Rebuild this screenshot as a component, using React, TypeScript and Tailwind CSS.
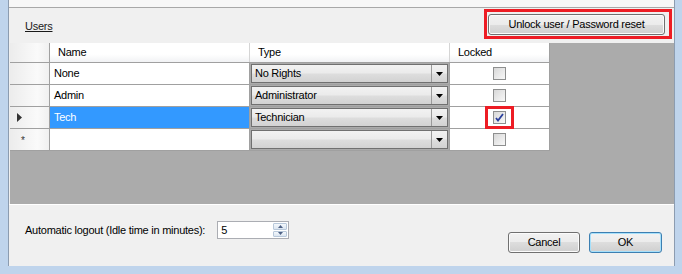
const FONT = "font-['Liberation_Sans',Arial,sans-serif] text-[11px] leading-none tracking-[-0.25px]";

type UserRow = { name: string; type: string; locked: boolean; current?: boolean; isNew?: boolean };

const rows: UserRow[] = [
  { name: 'None', type: 'No Rights', locked: false },
  { name: 'Admin', type: 'Administrator', locked: false },
  { name: 'Tech', type: 'Technician', locked: true, current: true },
  { name: '', type: '', locked: false, isNew: true },
];

function ComboCell({ value }: { value: string }) {
  return (
    <div className="flex h-full w-[200px] items-stretch border-r border-[#a0a0a0] p-[1px]">
      <div className="flex flex-1 border border-[#707070] bg-[linear-gradient(#f2f2f2_0%,#ebebeb_45%,#dddddd_55%,#d2d2d2_100%)]">
        <div className="flex flex-1 items-center pl-[3px] text-black">{value}</div>
        <div className="flex w-[16px] items-center justify-center border-l border-[#9a9a9a]">
          <svg width="7" height="4" viewBox="0 0 7 4">
            <path d="M0 0h7L3.5 4z" fill="#000" />
          </svg>
        </div>
      </div>
    </div>
  );
}

function CheckBox({ checked }: { checked: boolean }) {
  return (
    <div className="flex h-[13px] w-[13px] items-center justify-center border border-[#8e8f8f] bg-[linear-gradient(135deg,#d8d8d8,#f8f8f8)]">
      {checked && (
        <svg width="9" height="9" viewBox="0 0 9 9">
          <path d="M1 5l2 2.5L8 1" stroke="#2a3f9c" strokeWidth="1.8" fill="none" />
        </svg>
      )}
    </div>
  );
}

function RowHeader({ row }: { row: UserRow }) {
  return (
    <div className="flex h-full w-[40px] items-center border-r border-[#a0a0a0] bg-[linear-gradient(90deg,#ececec,#fafafa_70%,#f0f0f0)]">
      {row.current && (
        <svg className="ml-[7px]" width="5" height="9" viewBox="0 0 5 9">
          <path d="M0 0l5 4.5L0 9z" fill="#333" />
        </svg>
      )}
      {row.isNew && <span className="ml-[11px] mt-[3px] text-[10px] text-[#333]">*</span>}
    </div>
  );
}

function GridRow({ row }: { row: UserRow }) {
  return (
    <div className="flex h-[22px] border-b border-[#a0a0a0]">
      <RowHeader row={row} />
      <div
        className={`flex w-[200px] items-center border-r border-[#a0a0a0] pl-[4px] ${
          row.current ? 'bg-[#3399ff] text-white' : 'bg-white text-black'
        }`}
      >
        {row.name}
      </div>
      <ComboCell value={row.type} />
      <div className="flex w-[100px] items-center justify-center border-r border-[#a0a0a0] bg-white">
        {row.current ? (
          <div className="border-[3px] border-[#ed1c24] px-[5px] py-[2px]">
            <CheckBox checked />
          </div>
        ) : (
          <CheckBox checked={row.locked} />
        )}
      </div>
    </div>
  );
}

function WinButton({ children, width, focused }: { children: string; width: string; focused?: boolean }) {
  return (
    <div
      className={`flex h-[21px] items-center justify-center rounded-[3px] border text-black ${width} ${
        focused
          ? 'border-[#3c7fb1] shadow-[inset_0_0_0_1px_#a6e0fb] bg-[linear-gradient(#f2f2f2_0%,#ebebeb_50%,#dddddd_50%,#cfcfcf_100%)]'
          : 'border-[#707070] shadow-[inset_0_0_0_1px_#fbfbfb] bg-[linear-gradient(#f2f2f2_0%,#ebebeb_50%,#dddddd_50%,#cfcfcf_100%)]'
      }`}
    >
      {children}
    </div>
  );
}

export default function App() {
  return (
    <div className={`flex h-[274px] w-[682px] bg-[#bfd4ec] pb-[8px] pl-[8px] pr-[7px] ${FONT}`}>
      <div className="flex flex-1 flex-col border-x border-[#8c9cb0]">
        <div className="h-[8px] border-b border-[#a8a8a8] bg-[#f7f7f7]" />

        <div className="flex flex-1 flex-col bg-[#f0f0f0]">
          {/* top bar */}
          <div className="flex h-[35px] items-start justify-between">
            <span className="ml-[16px] mt-[13px] text-[#1a1a1a] underline">Users</span>
            <div className="mr-[2px] mt-[1px] border-[3px] border-[#ed1c24] pb-[1px] pl-[1px] pr-[4px] pt-[2px]">
              <WinButton width="w-[177px]">Unlock user / Password reset</WinButton>
            </div>
          </div>

          {/* grid */}
          <div className="ml-[1px] h-[161px] bg-[#ababab]">
            <div className="flex h-[20px] w-[540px] border-b border-[#a0a0a0] bg-[linear-gradient(#ffffff,#ffffff_60%,#f1f2f4)]">
              <div className="w-[40px] border-r border-[#a0a0a0] bg-[linear-gradient(90deg,#ececec,#fafafa_70%,#f0f0f0)]" />
              <div className="flex w-[200px] items-center border-r border-[#d5d5d5] pl-[8px] text-black">Name</div>
              <div className="flex w-[200px] items-center border-r border-[#d5d5d5] pl-[8px] text-black">Type</div>
              <div className="flex w-[100px] items-center border-r border-[#a0a0a0] pl-[8px] text-black">Locked</div>
            </div>
            <div className="w-[540px]">
              {rows.map((r, i) => (
                <GridRow key={i} row={r} />
              ))}
            </div>
          </div>

          {/* bottom */}
          <div className="flex flex-1 justify-between border-t border-white">
            <div className="ml-[16px] mt-[16px] flex h-[18px] items-center">
              <span className="text-black">Automatic logout (Idle time in minutes):</span>
              <div className="ml-[12px] flex h-[18px] w-[72px] border border-[#abadb3] bg-white">
                <span className="flex flex-1 items-center pl-[3px] text-black">5</span>
                <div className="flex w-[16px] flex-col gap-[1px] p-[1px]">
                  <div className="flex flex-1 items-center justify-center rounded-[1px] border border-[#b8c8da] bg-[linear-gradient(#f4f8fc,#dbe5f0)]">
                    <svg width="5" height="3" viewBox="0 0 5 3">
                      <path d="M0 3h5L2.5 0z" fill="#4d6185" />
                    </svg>
                  </div>
                  <div className="flex flex-1 items-center justify-center rounded-[1px] border border-[#b8c8da] bg-[linear-gradient(#f4f8fc,#dbe5f0)]">
                    <svg width="5" height="3" viewBox="0 0 5 3">
                      <path d="M0 0h5L2.5 3z" fill="#4d6185" />
                    </svg>
                  </div>
                </div>
              </div>
            </div>
            <div className="mr-[12px] mt-[27px] flex gap-[9px]">
              <WinButton width="w-[72px]">Cancel</WinButton>
              <WinButton width="w-[73px]" focused>
                OK
              </WinButton>
            </div>
          </div>
        </div>
      </div>
    </div>
  );
}
